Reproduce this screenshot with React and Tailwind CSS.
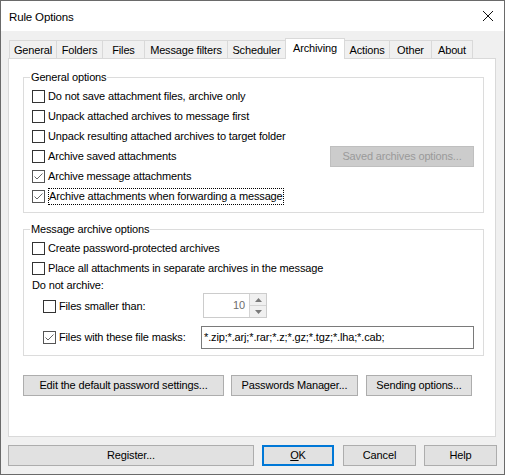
import React from "react";

function Check({ checked }) {
  return (
    <span
      className={
        "inline-flex items-center justify-center w-[13px] h-[13px] shrink-0 bg-white border " +
        (checked ? "border-[#555555]" : "border-[#333333]")
      }
    >
      {checked && (
        <svg width="11" height="11" viewBox="0 0 11 11">
          <polyline points="1.5,5.5 4,8 9.5,2.5" fill="none" stroke="#666666" strokeWidth="1" />
        </svg>
      )}
    </span>
  );
}

function Row({ checked, children, focus, right }) {
  return (
    <div className="h-[20px] flex items-center pl-[8px] pr-[9px]">
      <Check checked={checked} />
      <span
        className={
          "ml-[3px] leading-[15px] whitespace-nowrap " +
          (focus ? "border border-dotted border-black -ml-[1px]" : "")
        }
      >
        {children}
      </span>
      {right && <div className="ml-auto">{right}</div>}
    </div>
  );
}

function Btn({ children, w, className = "" }) {
  return (
    <div
      className={
        "h-[21px] flex items-center justify-center bg-[#e1e1e1] border border-[#adadad] whitespace-nowrap " +
        className
      }
      style={{ width: w }}
    >
      {children}
    </div>
  );
}

const tabs = [
  ["General", 48],
  ["Folders", 46],
  ["Files", 42],
  ["Message filters", 83],
  ["Scheduler", 58],
  ["Archiving", 59],
  ["Actions", 45],
  ["Other", 42],
  ["About", 41],
];

export default function App() {
  return (
    <div className="w-[505px] h-[475px] border border-[#6a6a6a] bg-[#f0f0f0] flex flex-col text-[11px] tracking-[-0.15px] text-black font-['Liberation_Sans',Arial,sans-serif] overflow-hidden">
      {/* title bar */}
      <div className="h-[30px] bg-white flex items-center justify-between pl-[8px] pr-[8px] shrink-0">
        <span className="text-[11.5px] leading-[16px] mt-[1px]">Rule Options</span>
        <svg width="12" height="12" viewBox="0 0 12 12" className="mr-[2px]">
          <path d="M1 1 L11 11 M11 1 L1 11" stroke="#111" strokeWidth="1" fill="none" />
        </svg>
      </div>

      {/* tabs */}
      <div className="flex items-end h-[20px] mt-[7px] ml-[8px] shrink-0">
        {tabs.map(([name, w], i) => {
          const sel = name === "Archiving";
          return (
            <div
              key={name}
              className={
                "flex justify-center border-t border-r border-l border-[#d9d9d9] " +
                (i > 0 ? "-ml-px " : "") +
                (sel
                  ? "h-[21px] -mb-px bg-white relative z-10 items-start pt-[2px]"
                  : "h-[18px] bg-[#f0f0f0] items-center pt-[1px]")
              }
              style={{ width: w + (i > 0 ? 1 : 0) }}
            >
              <span className="leading-[15px] whitespace-nowrap">{name}</span>
            </div>
          );
        })}
      </div>

      {/* panel */}
      <div className="ml-[7px] w-[488px] h-[379px] bg-white border border-[#d9d9d9] shrink-0 flex flex-col">
        <fieldset className="ml-[14px] w-[461px] mt-[10px] border border-[#dcdcdc] pt-[1px] pb-[6px]">
          <legend className="ml-[6px] px-[1px] leading-[16px]">General options</legend>
          <Row>Do not save attachment files, archive only</Row>
          <Row>Unpack attached archives to message first</Row>
          <Row>Unpack resulting attached archives to target folder</Row>
          <Row
            right={
              <div className="w-[144px] h-[21px] flex items-center justify-center bg-[#cccccc] border border-[#bfbfbf] text-[#9a9a9a]">
                Saved archives options...
              </div>
            }
          >
            Archive saved attachments
          </Row>
          <Row checked>Archive message attachments</Row>
          <Row checked focus>
            Archive attachments when forwarding a message
          </Row>
        </fieldset>

        <fieldset className="ml-[14px] w-[461px] mt-[8px] border border-[#dcdcdc] pt-[1px] pb-[6px]">
          <legend className="ml-[6px] px-[1px] leading-[16px]">Message archive options</legend>
          <Row>Create password-protected archives</Row>
          <Row>Place all attachments in separate archives in the message</Row>
          <div className="h-[15px] flex items-center pl-[8px] leading-[15px]">Do not archive:</div>
          <div className="flex items-center h-[25px] pl-[19px]">
            <div className="mt-[2px] flex items-center">
              <Check />
              <span className="ml-[3px] leading-[15px] whitespace-nowrap">Files smaller than:</span>
            </div>
            <div className="ml-auto mr-[216px] w-[64px] h-[25px] flex border border-[#cccccc] bg-white">
              <div className="flex-1 flex items-center justify-end pr-[4px] text-[#6d6d6d]">10</div>
              <div className="w-[17px] flex flex-col">
                <div className="flex-1 flex items-center justify-center bg-[#f0f0f0] border-l border-b border-[#d4d4d4]">
                  <svg width="7" height="4" viewBox="0 0 7 4">
                    <path d="M0 4 L3.5 0 L7 4 Z" fill="#7a7a7a" />
                  </svg>
                </div>
                <div className="flex-1 flex items-center justify-center bg-[#f0f0f0] border-l border-[#d4d4d4]">
                  <svg width="7" height="4" viewBox="0 0 7 4">
                    <path d="M0 0 L3.5 4 L7 0 Z" fill="#7a7a7a" />
                  </svg>
                </div>
              </div>
            </div>
          </div>
          <div className="flex items-center mt-[8px] h-[23px] pl-[19px]">
            <Check checked />
            <span className="ml-[3px] leading-[15px] whitespace-nowrap">Files with these file masks:</span>
            <div className="ml-auto mr-[9px] w-[273px] h-[23px] border border-[#7a7a7a] bg-white flex items-center pl-[2px] whitespace-nowrap">
              *.zip;*.arj;*.rar;*.z;*.gz;*.tgz;*.lha;*.cab;
            </div>
          </div>
        </fieldset>

        <div className="flex ml-[14px] mt-[19px]">
          <Btn w={201}>Edit the default password settings...</Btn>
          <Btn w={127} className="ml-[7px]">Passwords Manager...</Btn>
          <Btn w={106} className="ml-[8px]">Sending options...</Btn>
        </div>
      </div>

      {/* bottom buttons */}
      <div className="flex mt-[8px] ml-[7px] shrink-0">
        <Btn w={246}>Register...</Btn>
        <div className="ml-[8px] w-[72px] h-[21px] flex items-center justify-center bg-[#e1e1e1] border-2 border-[#0078d7]">
          <span>
            <span className="underline">O</span>K
          </span>
        </div>
        <Btn w={73} className="ml-[9px]">Cancel</Btn>
        <Btn w={73} className="ml-[8px]">Help</Btn>
      </div>
    </div>
  );
}
